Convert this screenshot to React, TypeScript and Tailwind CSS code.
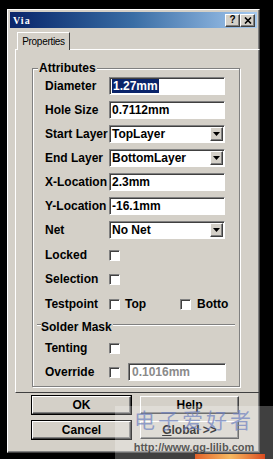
import React from 'react';

const face = 'bg-[#d4d0c8]';
const raised =
  'border border-t-white border-l-white border-r-[#404040] border-b-[#404040] shadow-[inset_-1px_-1px_0_#808080]';
const sunken =
  'border border-t-[#808080] border-l-[#808080] border-r-white border-b-white shadow-[inset_1px_1px_0_#404040]';

function TextBox({ value, selected }: { value: string; selected?: boolean }) {
  return (
    <div className={`w-[116px] h-[18px] bg-white ${sunken} flex items-center pl-[2px]`}>
      <span className={selected ? 'bg-[#0a246a] text-white px-[1px] leading-[14px]' : 'leading-[14px]'}>
        {value}
      </span>
    </div>
  );
}

function Combo({ value }: { value: string }) {
  return (
    <div className={`w-[116px] h-[18px] bg-white ${sunken} flex items-center pl-[2px]`}>
      <span className="flex-1 leading-[14px]">{value}</span>
      <div className={`w-[13px] h-[14px] mr-[1px] ${face} ${raised} flex items-center justify-center`}>
        <svg width="7" height="4" viewBox="0 0 7 4">
          <path d="M0 0h7L3.5 4z" fill="#000" />
        </svg>
      </div>
    </div>
  );
}

function Check() {
  return <div className={`w-[11px] h-[11px] bg-white ${sunken}`} />;
}

function Row({ label, children, className = '' }: { label: string; children: React.ReactNode; className?: string }) {
  return (
    <div className={`flex items-center h-[24px] ${className}`}>
      <span className="w-[64px] pl-[12px] box-content shrink-0">{label}</span>
      {children}
    </div>
  );
}

function Btn({ label, def }: { label: React.ReactNode; def?: boolean }) {
  return (
    <div
      className={`w-[99px] h-[18px] ${face} flex items-center justify-center ${
        def ? 'outline outline-1 outline-black ' + raised : raised
      }`}
    >
      {label}
    </div>
  );
}

export default function App() {
  return (
    <div
      className="relative w-[273px] h-[459px] bg-black overflow-hidden text-[12px] font-bold text-black"
      style={{ fontFamily: '"Liberation Sans", Arial, sans-serif' }}
    >
      <div className={`absolute left-[7px] top-[9px] w-[253px] h-[444px] ${face} ${raised} p-[1px]`}>
        {/* title bar */}
        <div className="h-[16px] mx-[1px] mt-[1px] bg-gradient-to-r from-[#0a246a] via-[#3a6ea5] to-[#a6caf0] flex items-center pl-[3px] pr-[2px]">
          <span
            className="text-white text-[10px] font-bold tracking-[1px] flex-1"
            style={{ fontFamily: '"Liberation Serif", serif' }}
          >
            Via
          </span>
          <div className={`w-[15px] h-[13px] ${face} ${raised} flex items-center justify-center text-[10px] leading-none`}>?</div>
          <div className={`w-[15px] h-[13px] ${face} ${raised} flex items-center justify-center`}>
            <svg width="8" height="7" viewBox="0 0 8 7">
              <path d="M1 0.5l6 6M7 0.5l-6 6" stroke="#000" strokeWidth="1.6" />
            </svg>
          </div>
        </div>

        {/* tabs */}
        <div className="pl-[6px] pt-[4px]">
          <div className="relative z-10 w-[53px] h-[18px] border border-b-0 border-t-white border-l-white border-r-[#404040] ml-[2px] flex items-center justify-center font-normal text-[10px] tracking-[-0.3px] whitespace-nowrap bg-[#d4d0c8]">
            Properties
          </div>
          <div className="-mt-[1px] w-[245px] h-[344px] border border-t-white border-l-white border-r-[#404040] border-b-[#404040] pt-[18px] pl-[16px]">
            {/* group box */}
            <div className="relative w-[208px] h-[319px] border border-[#808080] shadow-[1px_1px_0_white,inset_1px_1px_0_white] pt-[5px]">
              <span className="absolute -top-[8px] left-[5px] bg-[#d4d0c8] px-[1px] leading-[14px]">Attributes</span>
              <Row label="Diameter"><TextBox value="1.27mm" selected /></Row>
              <Row label="Hole Size"><TextBox value="0.7112mm" /></Row>
              <Row label="Start Layer"><Combo value="TopLayer" /></Row>
              <Row label="End Layer"><Combo value="BottomLayer" /></Row>
              <Row label="X-Location"><TextBox value="2.3mm" /></Row>
              <Row label="Y-Location"><TextBox value="-16.1mm" /></Row>
              <Row label="Net"><Combo value="No Net" /></Row>
              <Row label="Locked" className="mt-[1px]"><Check /></Row>
              <Row label="Selection"><Check /></Row>
              <Row label="Testpoint" className="h-[26px]">
                <Check />
                <span className="ml-[5px] w-[55px]">Top</span>
                <Check />
                <span className="ml-[6px]">Botto</span>
              </Row>
              <div className="relative h-[19px] flex items-center">
                <div className="absolute left-[4px] right-[4px] top-[7px] border-t border-[#808080] shadow-[0_1px_0_white]" />
                <span className="relative ml-[8px] bg-[#d4d0c8] pr-[1px] leading-[14px]">Solder Mask</span>
              </div>
              <Row label="Tenting"><Check /></Row>
              <Row label="Override">
                <Check />
                <div className={`ml-[8px] w-[98px] h-[18px] bg-white ${sunken} flex items-center pl-[3px] text-[#8a8a8a]`}>
                  0.1016mm
                </div>
              </Row>
            </div>
          </div>
        </div>

        {/* buttons */}
        <div className="grid grid-cols-[99px_99px] gap-x-[9px] gap-y-[7px] pl-[23px] pt-[3px]">
          <Btn label="OK" def />
          <Btn label="Help" />
          <Btn label="Cancel" def />
          <Btn
            label={
              <span>
                <span className="underline">G</span>lobal &gt;&gt;
              </span>
            }
          />
        </div>
      </div>

      {/* watermark */}
      <div className="absolute left-[115px] top-[406px] w-[158px] h-[53px] bg-white/25 flex flex-col items-center whitespace-nowrap">
        <span
          className="text-[21px] font-normal leading-[26px] text-[#6c7fc0]/70 tracking-[3px]"
          style={{ fontFamily: '"Noto Sans CJK SC", sans-serif' }}
        >
          电子爱好者
        </span>
        <span className="mt-[9px] text-[11px] leading-[12px] text-[#333]/80">http://www.gg-lilib.com</span>
        <div className="absolute left-[80px] bottom-0 w-[70px] h-[5px] bg-gradient-to-r from-[#e0602a] via-[#f4b860] to-[#d94a20]" />
      </div>
    </div>
  );
}
